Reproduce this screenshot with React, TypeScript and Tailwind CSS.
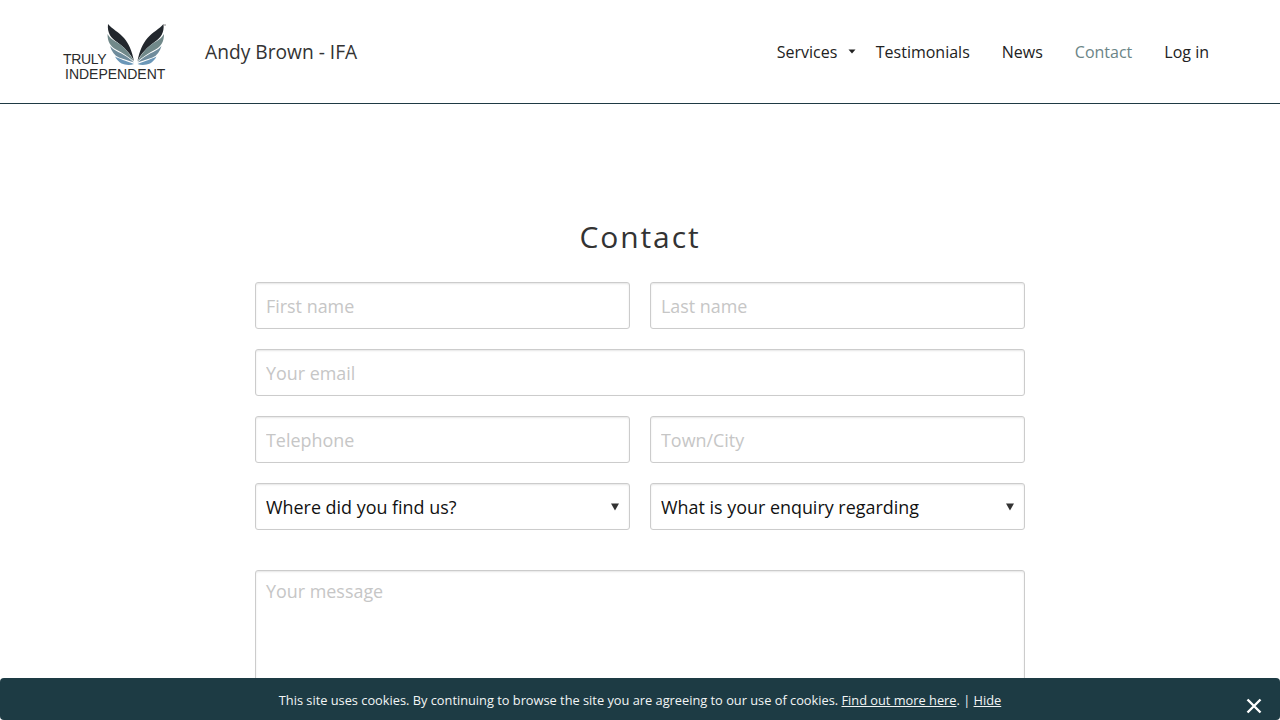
import React from 'react';

const font = { fontFamily: '"Open Sans", sans-serif' };

const fieldClass =
  'h-[47px] w-full rounded-[3px] border border-[#cccccc] bg-white px-[10px] text-[17.92px] text-[#111] shadow-[inset_0_1px_2px_rgba(0,0,0,0.1)] outline-none placeholder:text-[#c6c6c6]';

const Feather: React.FC<{ d: string; fill: string }> = ({ d, fill }) => (
  <>
    <path d={d} fill={fill} />
    <path d={d} fill={fill} transform="matrix(-1 0 0 1 271.5 0)" />
  </>
);

const Logo = () => (
  <svg width="110" height="65" viewBox="60 19 110 65" className="shrink-0">
    <Feather fill="#22272d" d="M108 24 C112 29 119 32 124 38 C129 44 132 51 134 61 C130 53 124 47 117 42 C111 38 107 33 108 24 Z" />
    <Feather fill="#71898a" d="M107.500 34 C110 38.500 114 40.500 118 43 C125 47.500 130 54 134 61.500 C129 57 123 53 116 49.500 C110 46.500 107.500 41 107.500 34 Z" />
    <Feather fill="#6f8c9c" d="M110 46 C114 50.500 119 52 123 54.500 C128 57.500 131 59.500 134 62.500 C129 60.500 124 59.500 119 57.500 C114.500 55.500 111.500 51.500 110 46 Z" />
    <Feather fill="#6b97b8" d="M115 56.500 C120 59 125 60.500 134 64 C130 65.500 125 65 121.500 63.500 C119 62 116.500 59.500 115 56.500 Z" />
    <circle cx="165" cy="25" r="1" fill="#b0b0b0" />
    <text x="63" y="64" fontFamily="Liberation Sans, sans-serif" fontSize="14" letterSpacing="-0.3" fill="#2b2b2b">TRULY</text>
    <text x="65" y="79" fontFamily="Liberation Sans, sans-serif" fontSize="14" fill="#2b2b2b">INDEPENDENT</text>
  </svg>
);

const Select: React.FC<{ label: string }> = ({ label }) => (
  <div className="relative">
    <select className={`${fieldClass} appearance-none pt-[2px]`} defaultValue={label} style={font}>
      <option>{label}</option>
    </select>
    <svg width="10" height="8" viewBox="0 0 10 8" className="pointer-events-none absolute right-[10.500px] top-[20px]">
      <path d="M1 0.500H9L5 7.500Z" fill="#333" />
    </svg>
  </div>
);

export default function App() {
  return (
    <div className="h-screen overflow-hidden bg-white" style={font}>
      <header className="flex h-[104px] items-center justify-between border-b border-[#1f3a44] pl-[60px] pr-[71px]">
        <div className="flex items-center gap-[35px]">
          <Logo />
          <span className="pt-[1px] text-[19.2px] text-[#333]">Andy Brown - IFA</span>
        </div>
        <nav className="flex items-center gap-8 text-[16px] text-[#222]">
          <a className="relative w-[67px] whitespace-nowrap">
            Services
            <svg width="8" height="8" viewBox="0 0 8 8" className="absolute left-[71px] top-[8px]">
              <path d="M0.500 1.500H7.500L4 5.500Z" fill="#222" />
            </svg>
          </a>
          <a>Testimonials</a>
          <a>News</a>
          <a className="text-[#6b8587]">Contact</a>
          <a>Log in</a>
        </nav>
      </header>

      <main className="mx-auto w-[770px] pt-[111px]">
        <h1 className="mb-[23px] text-center text-[30px] leading-[44px] tracking-[1.9px] text-[#333]">Contact</h1>
        <form className="grid grid-cols-2 gap-5">
          <input className={fieldClass} placeholder="First name" />
          <input className={fieldClass} placeholder="Last name" />
          <input className={`${fieldClass} col-span-2`} placeholder="Your email" />
          <input className={fieldClass} placeholder="Telephone" />
          <input className={fieldClass} placeholder="Town/City" />
          <Select label="Where did you find us?" />
          <Select label="What is your enquiry regarding" />
          <textarea
            className="col-span-2 mt-5 h-[200px] w-full resize-none rounded-[3px] border border-[#cccccc] bg-white px-[10px] py-[7px] text-[17.92px] shadow-[inset_0_1px_2px_rgba(0,0,0,0.1)] outline-none placeholder:text-[#c6c6c6]"
            placeholder="Your message"
          />
        </form>
      </main>

      <div className="fixed inset-x-0 bottom-0 flex h-[42px] justify-center rounded-[4px] bg-[#1d3b44] pt-[13px] text-[12.8px] leading-[18px] text-white">
        <p className="text-[#f2f5f5]">
          This site uses cookies. By continuing to browse the site you are agreeing to our use of cookies.{' '}
          <a className="underline">Find out more here</a>. | <a className="underline">Hide</a>
        </p>
        <svg width="16" height="16" viewBox="0 0 16 16" className="absolute right-[18px] top-[20px]">
          <path d="M1.500 1.500L14.500 14.500M14.500 1.500L1.500 14.500" stroke="#fff" strokeWidth="2.400" />
        </svg>
      </div>
    </div>
  );
}
